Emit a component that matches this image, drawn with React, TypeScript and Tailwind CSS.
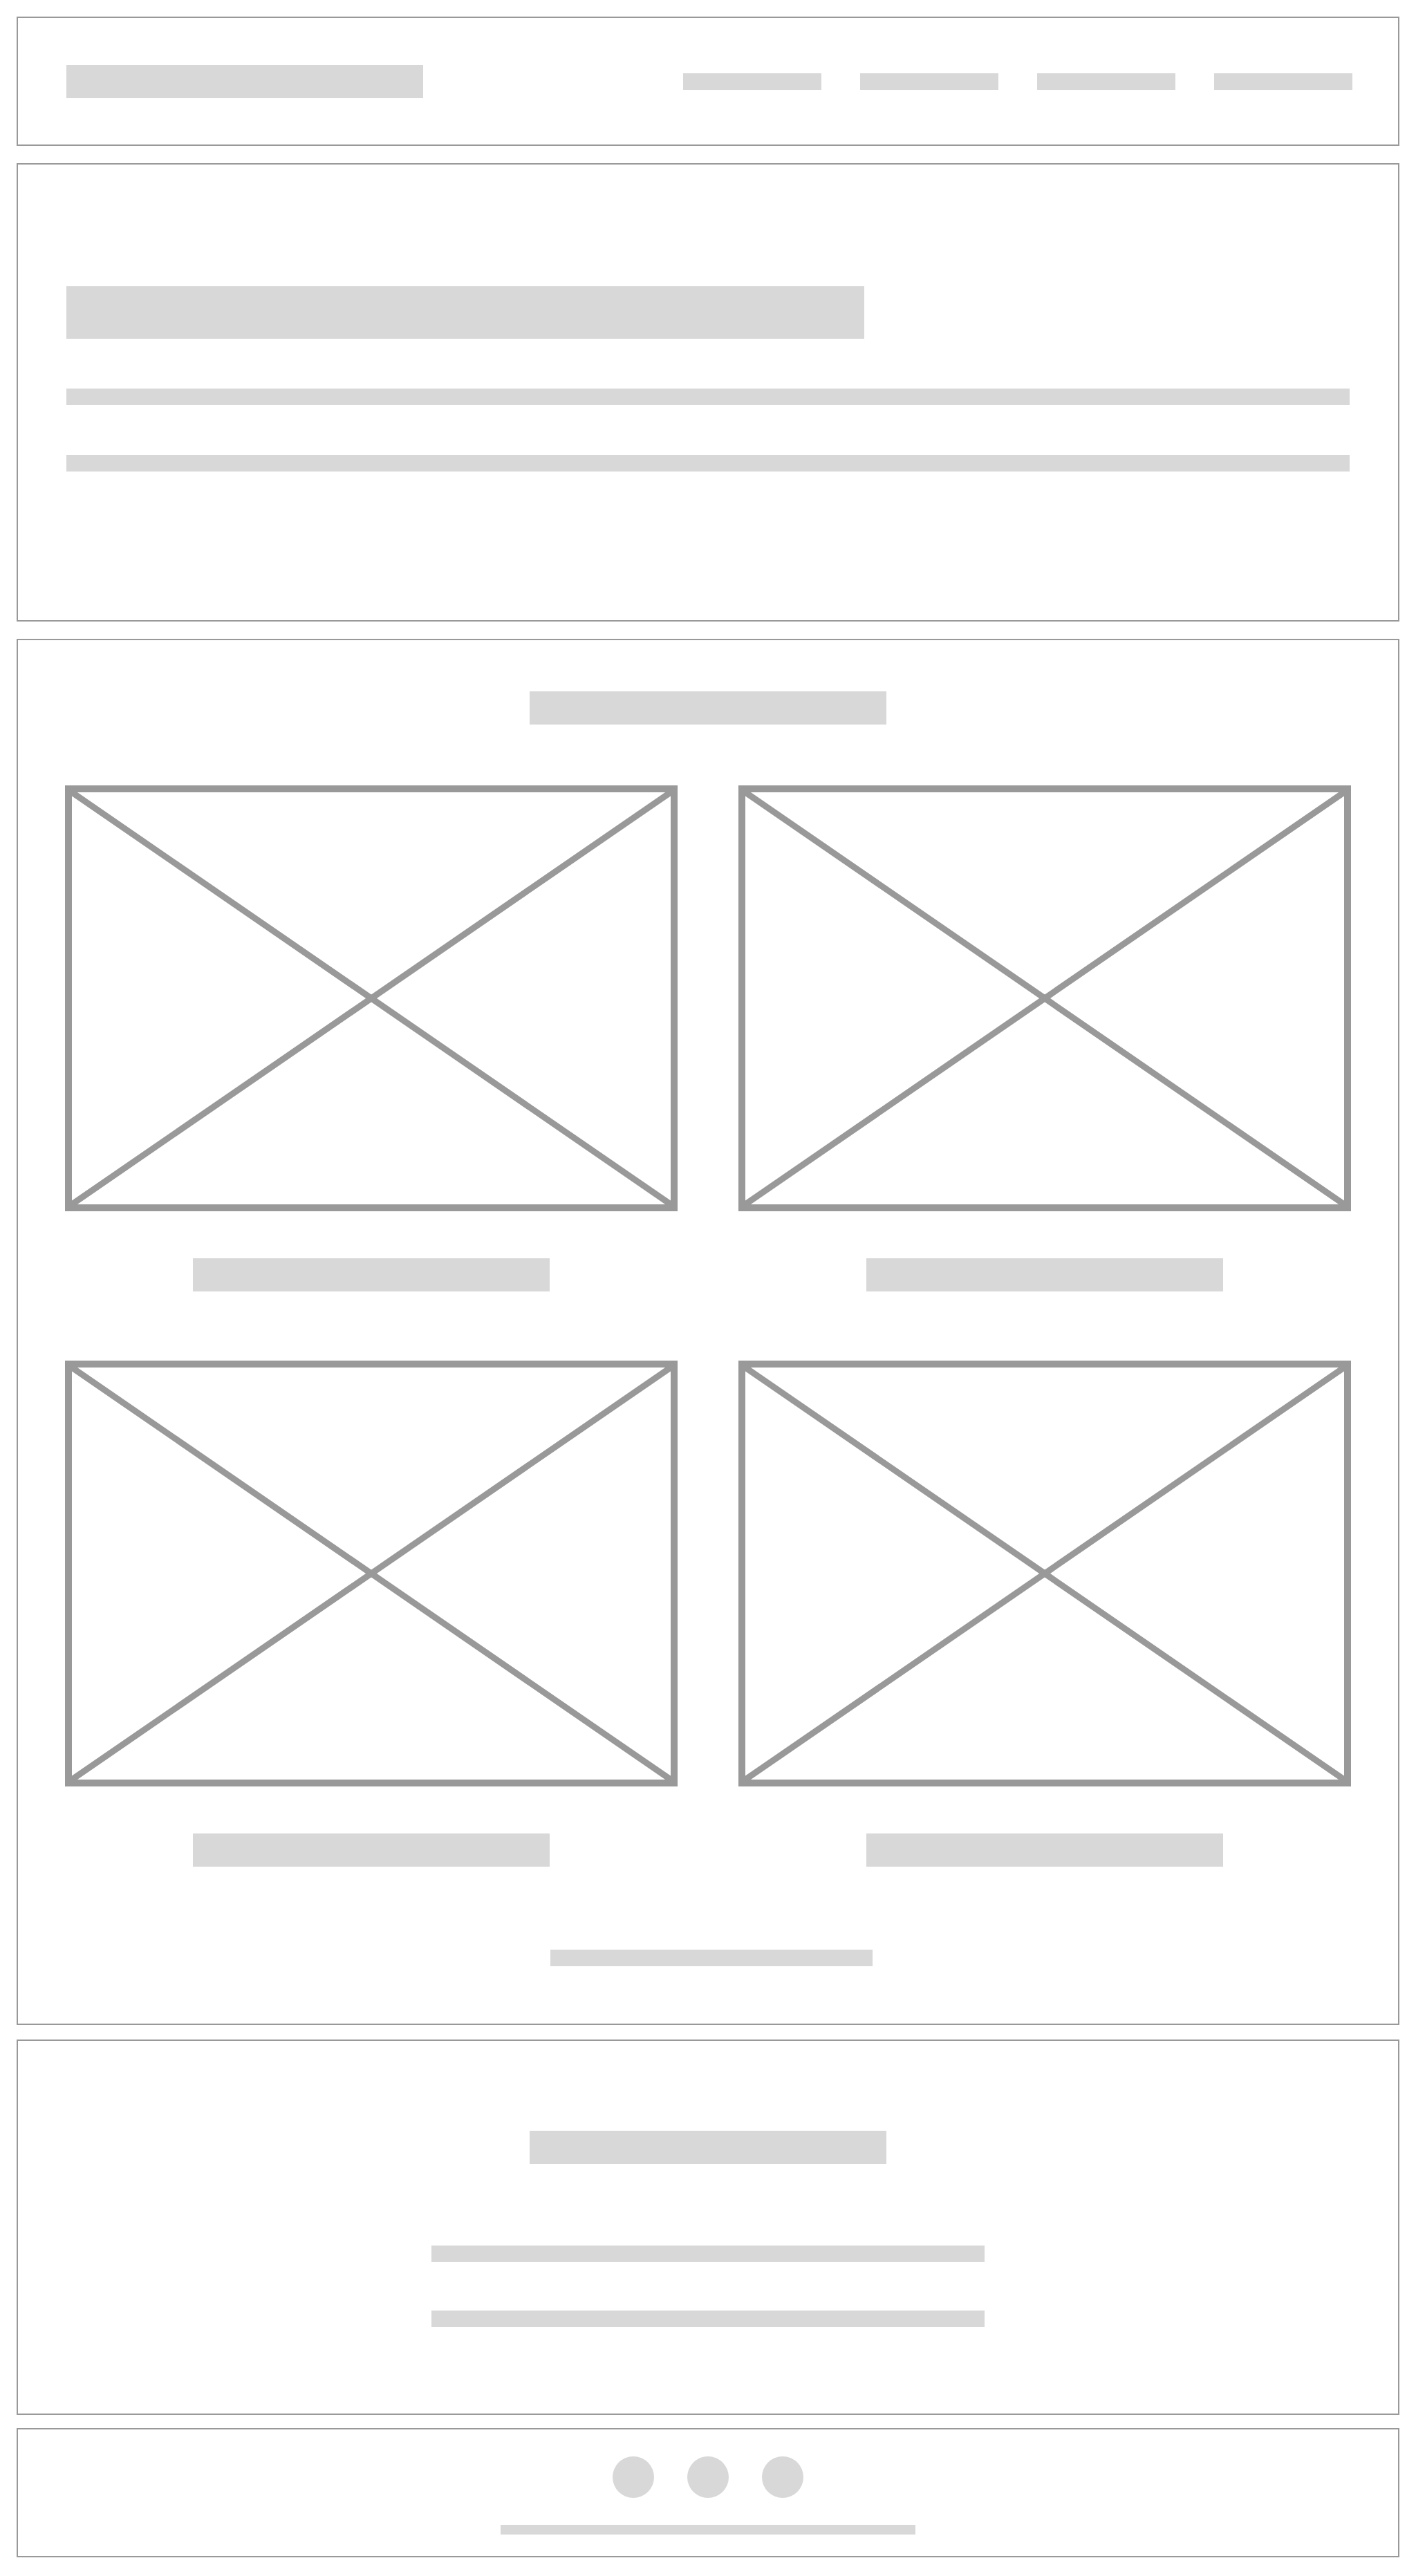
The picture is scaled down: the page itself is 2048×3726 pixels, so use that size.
import React from 'react';

const line = '#999999';

function ImagePlaceholder() {
  return (
    <div className="h-[616px] w-full border-[10px] border-[#999999]">
      <svg className="block h-full w-full" viewBox="0 0 100 100" preserveAspectRatio="none">
        <line x1="0" y1="0" x2="100" y2="100" stroke={line} strokeWidth="9" vectorEffect="non-scaling-stroke" />
        <line x1="100" y1="0" x2="0" y2="100" stroke={line} strokeWidth="9" vectorEffect="non-scaling-stroke" />
      </svg>
    </div>
  );
}

function GalleryCard() {
  return (
    <div className="flex flex-col items-center">
      <ImagePlaceholder />
      <div className="mt-[68px] h-12 w-[516px] bg-[#d8d8d8]" />
    </div>
  );
}

export default function App() {
  const navItems = [0, 1, 2, 3];
  const cards = [0, 1, 2, 3];

  return (
    <div className="min-h-screen bg-white px-6 pt-6 pb-[25px]">
      {/* header */}
      <header className="flex h-[187px] items-center justify-between border-2 border-[#999999] pl-[70px] pr-[66px]">
        <div className="h-12 w-[516px] bg-[#d8d8d8]" />
        <nav className="flex gap-14">
          {navItems.map((i) => (
            <div key={i} className="h-6 w-[200px] bg-[#d8d8d8]" />
          ))}
        </nav>
      </header>

      {/* hero */}
      <section className="mt-[25px] h-[663px] border-2 border-[#999999] px-[70px] pt-[176px]">
        <div className="h-[76px] w-[1154px] bg-[#d8d8d8]" />
        <div className="mt-[72px] h-6 w-full bg-[#d8d8d8]" />
        <div className="mt-[72px] h-6 w-full bg-[#d8d8d8]" />
      </section>

      {/* gallery */}
      <section className="mt-[25px] flex flex-col items-center border-2 border-[#999999] px-[68px] pt-[74px] pb-[83px]">
        <div className="h-12 w-[516px] bg-[#d8d8d8]" />
        <div className="mt-[88px] grid w-full grid-cols-2 gap-x-[88px] gap-y-[100px]">
          {cards.map((i) => (
            <GalleryCard key={i} />
          ))}
        </div>
        <div className="mt-[120px] h-6 w-[466px] translate-x-[5px] bg-[#d8d8d8]" />
      </section>

      {/* about */}
      <section className="mt-[21px] flex flex-col items-center border-2 border-[#999999] pt-[130px] pb-[125px]">
        <div className="h-12 w-[516px] bg-[#d8d8d8]" />
        <div className="mt-[118px] h-6 w-[800px] bg-[#d8d8d8]" />
        <div className="mt-[70px] h-6 w-[800px] bg-[#d8d8d8]" />
      </section>

      {/* footer */}
      <footer className="mt-[19px] flex flex-col items-center border-2 border-[#999999] pt-[39px] pb-[31px]">
        <div className="flex gap-12">
          <div className="h-[60px] w-[60px] rounded-full bg-[#d8d8d8]" />
          <div className="h-[60px] w-[60px] rounded-full bg-[#d8d8d8]" />
          <div className="h-[60px] w-[60px] rounded-full bg-[#d8d8d8]" />
        </div>
        <div className="mt-[39px] h-[14px] w-[600px] bg-[#d8d8d8]" />
      </footer>
    </div>
  );
}
